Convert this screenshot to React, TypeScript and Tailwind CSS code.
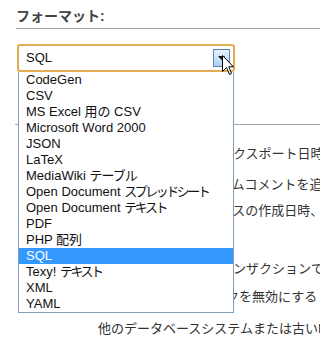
// label split into latin part + katakana part (kana is narrower in the original font)
const formats: { label: string; kana?: string; kanaClass?: string }[] = [
  { label: 'CodeGen' },
  { label: 'CSV' },
  { label: 'MS Excel 用の CSV' },
  { label: 'Microsoft Word 2000' },
  { label: 'JSON' },
  { label: 'LaTeX' },
  { label: 'MediaWiki ', kana: 'テーブル', kanaClass: 'tracking-[-1px]' },
  { label: 'Open Document ', kana: 'スプレッドシート', kanaClass: 'tracking-[-2.5px]' },
  { label: 'Open Document ', kana: 'テキスト', kanaClass: 'tracking-[-2.5px]' },
  { label: 'PDF' },
  { label: 'PHP 配列' },
  { label: 'SQL' },
  { label: 'Texy! ', kana: 'テキスト', kanaClass: 'tracking-[-2.5px]' },
  { label: 'XML' },
  { label: 'YAML' },
];

const selected = 'SQL';

export default function App() {
  return (
    <div className="relative w-[320px] h-[349px] overflow-hidden bg-white font-['Liberation_Sans','Noto_Sans_CJK_JP',sans-serif] text-[13px] text-[#333]">
      {/* Heading */}
      <div className="pl-4 pt-[7px]">
        <h3 className="text-[14px] font-bold leading-[18px] text-[#444] whitespace-nowrap">フォーマット:</h3>
        <div className="mt-[3px] h-px bg-[#a0a0a0]" />
      </div>

      {/* Select */}
      <div className="ml-[17px] mt-[15px] w-[218px] h-[28px] border-2 border-[#e3ab52] rounded-[3px] flex items-center pl-[7px] pr-[3px]">
        <span className="flex-1 leading-[16px] text-[#111]">{selected}</span>
        <div className="w-[17px] h-[18px] border border-[#5a86b0] bg-gradient-to-b from-[#e6f2fc] to-[#aed1ef] flex items-center justify-center">
          <svg width="7" height="4" viewBox="0 0 7 4">
            <path d="M0 0H7L3.5 4Z" fill="#111" />
          </svg>
        </div>
      </div>

      {/* Options behind the dropdown */}
      <div className="mt-[52px] ml-[15px] h-px bg-[#a8a8a8]" />
      <div className="leading-[16px] whitespace-nowrap">
        <p className="mt-[21px] pl-[220px]">エクスポート日時を含める</p>
        <p className="mt-[15px] pl-[206px]">カラムコメントを追加する</p>
        <p className="mt-[10px] pl-[168px]">データベースの作成日時、更新日時を含める</p>
        <p className="mt-[42px] pl-[207px]">トランザクションで囲む</p>
        <p className="mt-[12px] pl-[122px]">外部キーのチェックを無効にする</p>
        <p className="mt-[16px] pl-[98px]">他のデータベースシステムまたは古いMySQLサーバ</p>
      </div>

      {/* Open dropdown list */}
      <ul className="absolute left-[18px] top-[72px] w-[216px] bg-white border-x border-b border-[#7f9db9]">
        {formats.map((f, i) => {
          const text = f.label + (f.kana ?? '');
          return (
            <li
              key={i}
              className={
                text === selected
                  ? 'h-4 leading-4 pl-[7px] bg-[#3399ff] text-white whitespace-nowrap'
                  : 'h-4 leading-4 pl-[7px] text-[#111] whitespace-nowrap'
              }
            >
              {f.label.replace(/ $/, '\u00a0')}
              {f.kana && <span className={f.kanaClass}>{f.kana}</span>}
            </li>
          );
        })}
      </ul>

      {/* Mouse pointer */}
      <svg className="absolute left-[222px] top-[55px]" width="13" height="21" viewBox="0 0 13 21">
        <path
          d="M0.5 0.5V16.5L4.5 12.5L7.5 19.5L9.5 18.5L6.8 11.8H11.5Z"
          fill="#fff"
          stroke="#000"
          strokeWidth="1"
          strokeLinejoin="miter"
        />
      </svg>
    </div>
  );
}
